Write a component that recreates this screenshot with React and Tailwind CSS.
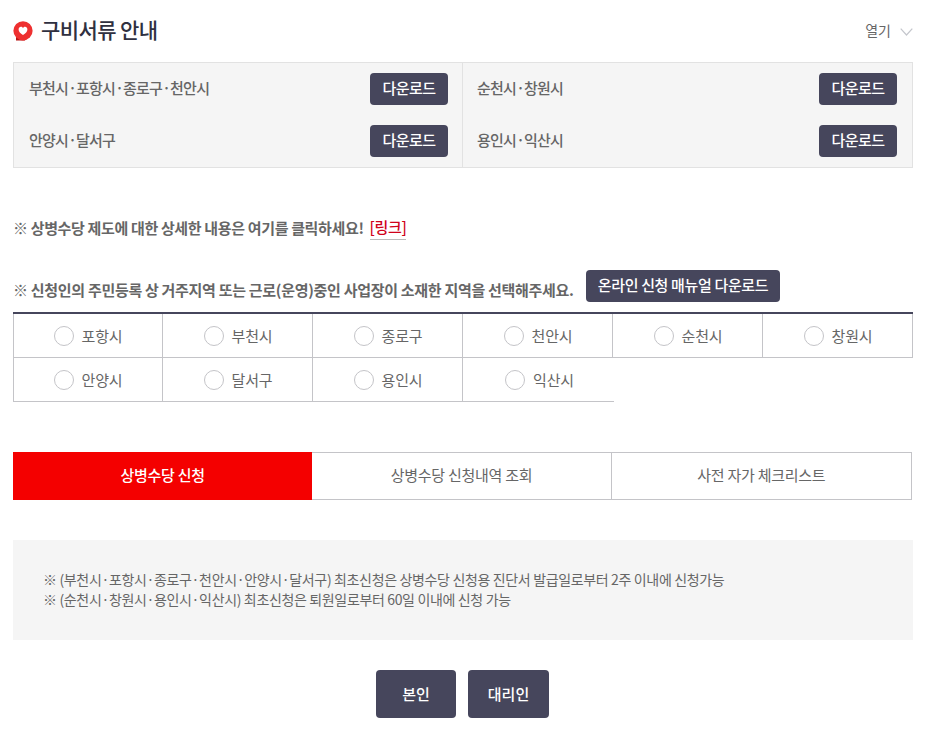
import React from 'react';

const downloads = [
  ['부천시·포항시·종로구·천안시', '순천시·창원시'],
  ['안양시·달서구', '용인시·익산시'],
];

const cities = ['포항시', '부천시', '종로구', '천안시', '순천시', '창원시', '안양시', '달서구', '용인시', '익산시'];

const tabs = ['상병수당 신청', '상병수당 신청내역 조회', '사전 자가 체크리스트'];

const cellClass = (i) => {
  if (i === 9) return 'w-[151px] pl-[2px]';
  if (i % 6 === 0) return 'border-l border-r';
  return 'pl-[1px] border-r';
};

const DownloadCell = ({ label }) => (
  <div className="flex items-center justify-between h-[32px]">
    <span className="pb-[2px] text-[15px] font-medium tracking-[-0.75px] text-[#666]">{label}</span>
    <button className="w-[78px] h-[32px] pb-[1px] rounded-[4px] bg-[#46465c] text-white text-[15px] font-medium tracking-[-0.5px]">
      다운로드
    </button>
  </div>
);

const App = () => {
  return (
    <div className="w-[939px] h-[739px] bg-white pl-[13px] overflow-hidden font-['Noto_Sans_CJK_KR','Noto_Sans',sans-serif]">
      <div className="w-[900px]">
        {/* Title */}
        <div className="flex items-center justify-between h-[62px]">
          <div className="flex items-center gap-[8px]">
            <svg width="20" height="20" viewBox="0 0 20 20">
              <path d="M3 13 L3 19.5 L12 19.5 L12 16 Z" fill="#b81414" />
              <circle cx="10" cy="9.8" r="9.6" fill="#ee3030" />
              <path d="M10 14 C7.4 12.2 5.6 10.6 5.6 8.4 C5.6 5.4 9 5 10 7.2 C11 5 14.4 5.4 14.4 8.4 C14.4 10.6 12.6 12.2 10 14 Z" fill="#fff" />
            </svg>
            <h1 className="pb-[2px] text-[21px] font-medium tracking-[-0.6px] text-[#2f3040]">구비서류 안내</h1>
          </div>
          <div className="flex items-center gap-[9px]">
            <span className="pb-[2px] text-[14px] text-[#666]">열기</span>
            <svg width="13" height="8" viewBox="0 0 13 8" className="mt-[1px]">
              <path d="M0.7 0.7 L6.5 7 L12.3 0.7" fill="none" stroke="#c4c6cc" strokeWidth="1.2" />
            </svg>
          </div>
        </div>

        {/* Download table */}
        <div className="grid grid-cols-2 h-[106px] border border-[#e2e2e2] bg-[#f5f5f5]">
          {[0, 1].map((col) => (
            <div
              key={col}
              className={col === 0
                ? 'flex flex-col gap-[20px] pt-[10px] pl-[15px] pr-[14px] border-r border-[#e2e2e2]'
                : 'flex flex-col gap-[20px] pt-[10px] pl-[14px] pr-[15px]'}
            >
              {downloads.map((row) => (
                <DownloadCell key={row[col]} label={row[col]} />
              ))}
            </div>
          ))}
        </div>

        {/* Notice line */}
        <p className="mt-[48px] h-[24px] flex items-center text-[15px] font-bold tracking-[-0.35px] text-[#666]">
          ※ 상병수당 제도에 대한 상세한 내용은 여기를 클릭하세요!
          <a className="ml-[6px] border-b border-[#bbb] text-[#d0021b] font-medium">[링크]</a>
        </p>

        {/* City select */}
        <div className="mt-[30px] flex items-center h-[32px]">
          <p className="relative top-[4px] w-[573px] shrink-0 whitespace-nowrap text-[15px] font-bold tracking-[-0.3px] text-[#666]">
            ※ 신청인의 주민등록 상 거주지역 또는 근로(운영)중인 사업장이 소재한 지역을 선택해주세요.
          </p>
          <button className="w-[194px] h-[32px] pb-[1px] rounded-[4px] bg-[#46465c] text-white text-[15px] font-medium tracking-[-0.35px]">
            온라인 신청 매뉴얼 다운로드
          </button>
        </div>

        <div className="mt-[10px] border-t-2 border-[#46465c] grid grid-cols-6 w-[900px]">
          {cities.map((city, i) => (
            <div
              key={city}
              className={`flex items-center justify-center gap-[8px] h-[44px] pt-[1px] border-b border-[#c4c4c8] ${cellClass(i)}`}
            >
              <span className="w-[20px] h-[20px] rounded-full border border-[#c4c4c8] bg-white" />
              <span className="text-[15px] tracking-[-0.2px] text-[#666]">{city}</span>
            </div>
          ))}
        </div>

        {/* Tabs */}
        <div className="mt-[50px] grid grid-cols-3 w-[899px] h-[48px] border-r border-[#c4c4c8]">
          {tabs.map((tab, i) => (
            <div
              key={tab}
              className={i === 0
                ? 'flex items-center justify-center pb-[2px] bg-[#f40000] text-white text-[15px] tracking-[-0.25px] font-medium'
                : 'flex items-center justify-center pb-[2px] border-y border-r border-[#c4c4c8] last:border-r-0 text-[#666] text-[15px] tracking-[-0.25px]'}
            >
              {tab}
            </div>
          ))}
        </div>

        {/* Notes */}
        <div className="mt-[40px] h-[100px] pb-[2px] bg-[#f5f5f5] pl-[30px] flex flex-col justify-center text-[14px] leading-[20px] tracking-[-0.35px] text-[#666]">
          <p>※ (부천시·포항시·종로구·천안시·안양시·달서구) 최초신청은 상병수당 신청용 진단서 발급일로부터 2주 이내에 신청가능</p>
          <p>※ (순천시·창원시·용인시·익산시) 최초신청은 퇴원일로부터 60일 이내에 신청 가능</p>
        </div>

        {/* Applicant buttons */}
        <div className="mt-[30px] flex justify-center gap-[12px] pr-[1px]">
          <button className="w-[80px] h-[48px] rounded-[4px] bg-[#46465c] text-white text-[15px] font-medium">본인</button>
          <button className="w-[81px] h-[48px] rounded-[4px] bg-[#46465c] text-white text-[15px] font-medium">대리인</button>
        </div>
      </div>
    </div>
  );
};

export default App;
